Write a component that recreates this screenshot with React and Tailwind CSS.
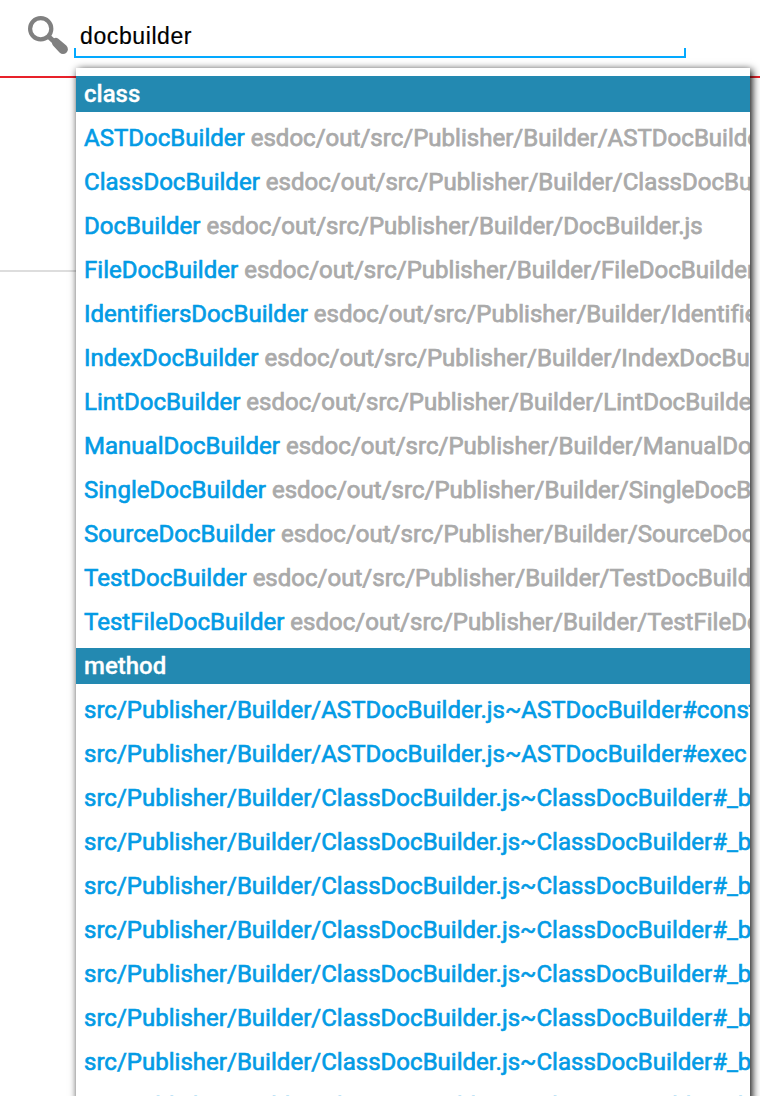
const classes = [
  ['ASTDocBuilder', 'ASTDocBuilder.js'],
  ['ClassDocBuilder', 'ClassDocBuilder.js'],
  ['DocBuilder', 'DocBuilder.js'],
  ['FileDocBuilder', 'FileDocBuilder.js'],
  ['IdentifiersDocBuilder', 'IdentifiersDocBuilder.js'],
  ['IndexDocBuilder', 'IndexDocBuilder.js'],
  ['LintDocBuilder', 'LintDocBuilder.js'],
  ['ManualDocBuilder', 'ManualDocBuilder.js'],
  ['SingleDocBuilder', 'SingleDocBuilder.js'],
  ['SourceDocBuilder', 'SourceDocBuilder.js'],
  ['TestDocBuilder', 'TestDocBuilder.js'],
  ['TestFileDocBuilder', 'TestFileDocBuilder.js'],
];

const methods = [
  'src/Publisher/Builder/ASTDocBuilder.js~ASTDocBuilder#constructor',
  'src/Publisher/Builder/ASTDocBuilder.js~ASTDocBuilder#exec',
  ...Array(8).fill('src/Publisher/Builder/ClassDocBuilder.js~ClassDocBuilder#_build'),
];

function GroupHeader({ children }) {
  return (
    <li className="h-9 bg-[#2389b1] px-2 text-2xl leading-9 font-medium text-white [-webkit-text-stroke:0.3px_#fff]">
      {children}
    </li>
  );
}

function Item({ name, path }) {
  return (
    <li className="h-11 overflow-hidden px-2 text-2xl leading-[52px] tracking-[0.018px] whitespace-nowrap">
      <a className="text-[#039be5] [-webkit-text-stroke:0.65px_#039be5]">{name}</a>
      {path && <span className="text-[#aaaaaa] [-webkit-text-stroke:0.75px_#aaaaaa]"> {path}</span>}
    </li>
  );
}

export default function App() {
  return (
    <div className="relative h-[1096px] w-[760px] overflow-hidden bg-white font-['Roboto',sans-serif]">
      <header className="flex h-[78px] border-b-2 border-[#e8212a] pl-7">
        <svg className="mt-4 h-[38px] w-10 shrink-0" viewBox="0 0 40 38" fill="none" stroke="#808080">
          <circle cx="12.7" cy="12.7" r="10.6" strokeWidth="4.2" />
          <path d="M20 20L26 25.5" strokeWidth="5" />
          <path
            d="M24 23.2L26.8 22Q28.5 21.4 30 22.6L38.3 29.6Q40.3 31.8 39.8 34.2Q38.8 37.8 35 38Q33.2 38 31.5 36.5L25 29.5Q23.6 27.8 24 26Z"
            fill="#808080"
            stroke="none"
          />
        </svg>
        <div className="mt-4 ml-[6px] flex h-[42px] w-[612px] flex-col justify-end">
          <div className="-mb-1 pl-1.5 text-[23px] leading-8 tracking-[0.6px] text-black [-webkit-text-stroke:0.2px_#000] font-['Liberation_Sans',sans-serif]">
            docbuilder
          </div>
          <div className="h-2.5 border-x-2 border-b-2 border-[#03a9ff]" />
        </div>
      </header>
      <div className="mr-10 h-[194px] border-b-2 border-[#dddddd]" />
      <ul className="absolute top-[68px] left-[76px] h-[1100px] w-[674px] overflow-hidden bg-white pt-2 shadow-[2px_2px_8px_#000]">
        <GroupHeader>class</GroupHeader>
        {classes.map(([name, file]) => (
          <Item key={name} name={name} path={`esdoc/out/src/Publisher/Builder/${file}`} />
        ))}
        <li className="h-2" />
        <GroupHeader>method</GroupHeader>
        {methods.map((m, i) => (
          <Item key={i} name={m} />
        ))}
      </ul>
    </div>
  );
}
